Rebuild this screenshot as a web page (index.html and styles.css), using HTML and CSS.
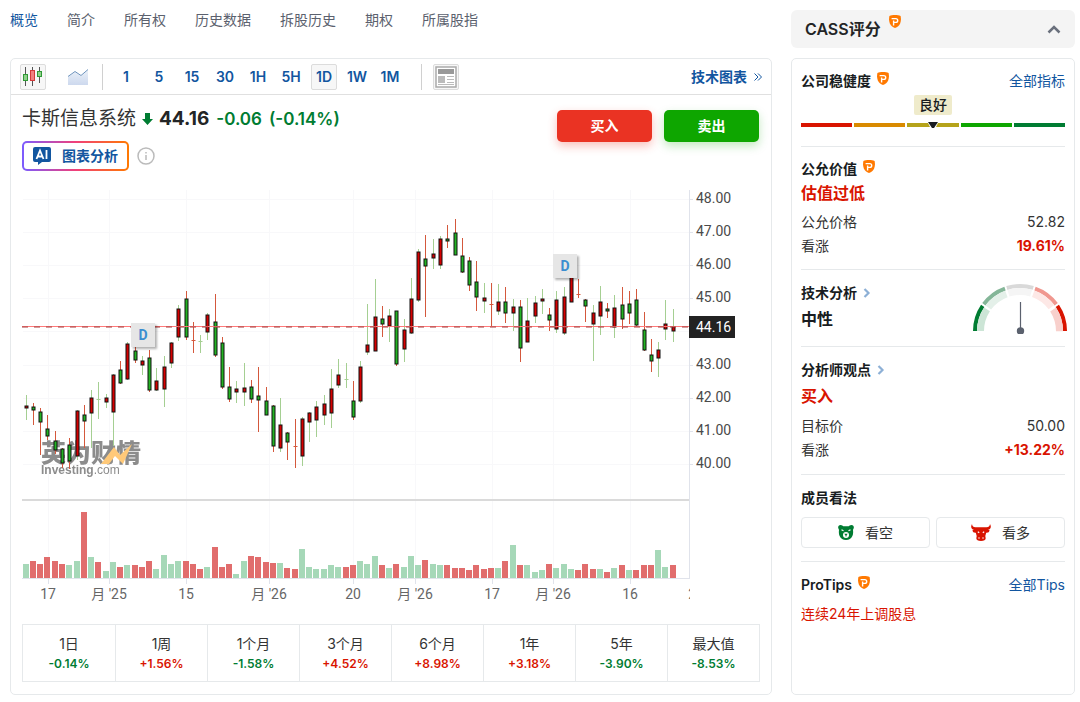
FILE: index.html
```html
<!DOCTYPE html>
<html lang="zh-CN">
<head>
    <meta charset="UTF-8">
    <meta name="viewport" content="width=device-width, initial-scale=1.0">
    <title>卡斯信息系统 - 概览</title>
    <link rel="stylesheet" href="styles.css">
</head>
<body>
<svg width="0" height="0" class="sprite" aria-hidden="true">
    <symbol id="pro" viewBox="0 0 12 13">
        <path fill="#ff7901" d="M6 0c2.200 0 4.200.4 5.600 1 .5 2.600.5 5-.4 7.200-1 2.400-2.800 4-5.200 4.800C3.600 12.200 1.800 10.600.8 8.200-.1 6-.1 3.600.4 1 1.800.4 3.800 0 6 0z"/>
        <path fill="none" stroke="#fff" stroke-width="1.400" d="M2.600 3.600h4.200a1.900 1.900 0 0 1 0 3.800H4.600M4.600 5.500v5"/>
    </symbol>
    <symbol id="next" viewBox="0 0 8 10">
        <path fill="none" stroke="#8db0d6" stroke-width="2.200" d="M1.500 1l4 4-4 4"/>
    </symbol>
</svg>

<div class="page">
    <main>
        <nav class="tabs">
            <a class="active" href="#">概览</a>
            <a href="#">简介</a>
            <a href="#">所有权</a>
            <a href="#">历史数据</a>
            <a href="#">拆股历史</a>
            <a href="#">期权</a>
            <a href="#">所属股指</a>
        </nav>

        <section class="card chart-card">
            <div class="toolbar">
                <button class="tool selected" type="button" aria-label="K线图">
                    <svg width="20" height="20" viewBox="0 0 20 20">
                        <path stroke="#555" d="M2.500 0v19M9.500 0v19M16.500 0v16"/>
                        <rect x=".5" y="7.500" width="4" height="6" fill="#8fd08a" stroke="#2f9a35"/>
                        <rect x="7.500" y="3.500" width="4" height="10" fill="#f08080" stroke="#d23a3a"/>
                        <rect x="14.500" y="4.500" width="4" height="5" fill="#8fd08a" stroke="#2f9a35"/>
                    </svg>
                </button>
                <button class="tool area" type="button" aria-label="面积图">
                    <svg width="20" height="16" viewBox="0 0 20 16">
                        <linearGradient id="fill" x2="0" y2="1"><stop stop-color="#eaf0f8"/><stop offset="1" stop-color="#cdd9ee"/></linearGradient>
                        <path fill="url(#fill)" d="M0 8l7-5 6 4 7-6v15H0z"/>
                        <path fill="none" stroke="#6d93bd" d="M0 7.500l7-5 6 4 7-6"/>
                    </svg>
                </button>
                <span class="divider"></span>
                <div class="intervals">
                    <button class="tool" type="button">1</button>
                    <button class="tool" type="button">5</button>
                    <button class="tool" type="button">15</button>
                    <button class="tool" type="button">30</button>
                    <button class="tool" type="button">1H</button>
                    <button class="tool" type="button">5H</button>
                    <button class="tool selected" type="button">1D</button>
                    <button class="tool" type="button">1W</button>
                    <button class="tool" type="button">1M</button>
                </div>
                <span class="divider last"></span>
                <button class="tool selected" type="button" aria-label="新闻">
                    <svg width="22" height="22" viewBox="0 0 22 22">
                        <rect x="1" y="1" width="20" height="20" fill="#fff" stroke="#aaa" stroke-width="1.500"/>
                        <path fill="#999" d="M3 3h16v5H3z"/>
                        <path fill="#bbb" d="M3 10h7v7H3z"/>
                        <path stroke="#bbb" d="M12 10.500h7M12 13.500h7M12 16.500h7M3 18.500h16"/>
                    </svg>
                </button>
                <a class="tech-link" href="#">技术图表 <svg width="8" height="8" viewBox="0 0 8 8"><path fill="none" stroke="#1256a0" d="M.5.5L4 4 .5 7.500M4 .5L7.500 4 4 7.500"/></svg></a>
            </div>

            <div class="chart-body">
                <div class="quote">
                    <div>
                        <div class="price-line">
                            <h1>卡斯信息系统</h1>
                            <svg width="11" height="12" viewBox="0 0 11 12"><path fill="#007c32" d="M3 0h5v6h3l-5.500 6L0 6h3z"/></svg>
                            <strong>44.16</strong>
                            <span class="change">-0.06</span>
                            <span class="change">(-0.14%)</span>
                        </div>
                        <div class="ai-line">
                            <button class="ai" type="button">
                                <svg width="18" height="18" viewBox="0 0 18 18">
                                    <path fill="#1256a0" d="M2 0h14a2 2 0 0 1 2 2v11a2 2 0 0 1-2 2H9l-4 3v-3H2a2 2 0 0 1-2-2V2a2 2 0 0 1 2-2z"/>
                                    <path fill="none" stroke="#fff" stroke-width="1.800" d="M3.500 12L7 3.500l3.500 8.500M4.800 9.500h4.500M13.500 3v9"/>
                                </svg>
                                图表分析
                            </button>
                            <svg width="18" height="18" viewBox="0 0 18 18" fill="none" stroke="#bbb" stroke-width="1.500">
                                <circle cx="9" cy="9" r="8"/>
                                <path d="M9 8v5M9 5v1.500"/>
                            </svg>
                        </div>
                    </div>
                    <div class="trade">
                        <button class="buy" type="button">买入</button>
                        <button class="sell" type="button">卖出</button>
                    </div>
                </div>

                <svg id="chart" class="chart" viewBox="0 0 738 430"></svg>

                <ul class="periods">
                    <li>1日<b class="green">-0.14%</b></li>
                    <li>1周<b class="red">+1.56%</b></li>
                    <li>1个月<b class="green">-1.58%</b></li>
                    <li>3个月<b class="red">+4.52%</b></li>
                    <li>6个月<b class="red">+8.98%</b></li>
                    <li>1年<b class="red">+3.18%</b></li>
                    <li>5年<b class="green">-3.90%</b></li>
                    <li>最大值<b class="green">-8.53%</b></li>
                </ul>
            </div>
        </section>
    </main>

    <aside>
        <button class="score-head" type="button">
            <span>CASS评分</span>
            <svg class="pro" width="12" height="13"><use href="#pro"/></svg>
            <svg class="chevron" width="14" height="9" viewBox="0 0 14 9"><path fill="none" stroke="#6a707c" stroke-width="2.500" d="M1.500 7.500L7 2l5.500 5.500"/></svg>
        </button>

        <div class="card score">
            <section class="health">
                <div class="row">
                    <h2>公司稳健度 <svg class="pro" width="12" height="13"><use href="#pro"/></svg></h2>
                    <a href="#">全部指标</a>
                </div>
                <span class="grade">良好</span>
                <div class="scale">
                    <i class="s1"></i><i class="s2"></i><i class="s3"></i><i class="s4"></i><i class="s5"></i>
                    <svg class="pointer" width="12" height="8" viewBox="0 0 12 8"><path fill="#fff" d="M0 0h12L8 8H4z"/><path fill="#181c21" d="M1 1h10L7 7H5z"/></svg>
                </div>
            </section>

            <section class="fair">
                <h2>公允价值 <svg class="pro" width="12" height="13"><use href="#pro"/></svg></h2>
                <p class="value red">估值过低</p>
                <div class="rows">
                    <div class="row"><span>公允价格</span><span>52.82</span></div>
                    <div class="row"><span>看涨</span><b class="red">19.61%</b></div>
                </div>
            </section>

            <section class="tech">
                <div>
                    <h2>技术分析 <svg width="8" height="10"><use href="#next"/></svg></h2>
                    <p class="value">中性</p>
                </div>
                <svg class="gauge" width="96" height="53" viewBox="-48 -50 96 53" fill="none">
                    <g stroke-width="4">
                        <path stroke="#007c32" d="M-45 0A45 45 0 0 1-37.300-25.200"/>
                        <path stroke="#84b698" d="M-45 0A45 45 0 0 1-37.300-25.200" transform="rotate(36.500)"/>
                        <path stroke="#d9d9d9" d="M-45 0A45 45 0 0 1-37.300-25.200" transform="rotate(73)"/>
                        <path stroke="#f0978f" d="M-45 0A45 45 0 0 1-37.300-25.200" transform="rotate(109.500)"/>
                        <path stroke="#d91400" d="M-45 0A45 45 0 0 1-37.300-25.200" transform="rotate(146)"/>
                    </g>
                    <g stroke-width="7">
                        <path stroke="#cce5d6" d="M-39.500 0A39.500 39.500 0 0 1-33-21.700"/>
                        <path stroke="#e4f0e9" d="M-39.500 0A39.500 39.500 0 0 1-33-21.700" transform="rotate(36.500)"/>
                        <path stroke="#f5f5f5" d="M-39.500 0A39.500 39.500 0 0 1-33-21.700" transform="rotate(73)"/>
                        <path stroke="#fde8e6" d="M-39.500 0A39.500 39.500 0 0 1-33-21.700" transform="rotate(109.500)"/>
                        <path stroke="#f8d0cc" d="M-39.500 0A39.500 39.500 0 0 1-33-21.700" transform="rotate(147)"/>
                    </g>
                    <path stroke="#5b616e" stroke-width="1.200" d="M.5 0v-29"/>
                    <circle cx=".5" r="3.700" fill="#5b616e"/>
                </svg>
            </section>

            <section>
                <h2>分析师观点 <svg width="8" height="10"><use href="#next"/></svg></h2>
                <p class="value red">买入</p>
                <div class="rows">
                    <div class="row"><span>目标价</span><span>50.00</span></div>
                    <div class="row"><span>看涨</span><b class="red">+13.22%</b></div>
                </div>
            </section>

            <section>
                <h2>成员看法</h2>
                <div class="votes">
                    <button type="button">
                        <svg width="16" height="15" viewBox="0 0 16 15">
                            <path fill="#007c32" d="M2.500 0C4 0 5 .8 5.300 1.300h5.400C11 .8 12 0 13.500 0 15.500 0 16.300 2 15.600 3.400c-.4.900-.6 1-.6 1.600.3 2.500.2 4.500-.6 6-1.200 2.500-3.400 4-6.400 4s-5.200-1.500-6.400-4C.8 9.500.7 7.500 1 5c0-.6-.2-.7-.6-1.600C-.3 2 .5 0 2.500 0z"/>
                            <circle cx="8" cy="10" r="3" fill="#fff"/>
                            <path fill="#007c32" d="M6.300 8.800h3.400L8.500 10.600v1h-1v-1z"/>
                            <path stroke="#fff" stroke-width="1.200" d="M3.500 4.800l2 1M12.500 4.800l-2 1"/>
                        </svg>
                        看空
                    </button>
                    <button type="button">
                        <svg width="20" height="17" viewBox="0 0 20 17">
                            <path fill="#d91400" d="M1 0c.1 2 1 3.200 3.500 3.200h11C18 3.200 18.900 2 19 0c1.700 3 .7 5.200-2 5.800l1.600.5c-.3 1.800-1.500 2.700-3.400 2.500L14.300 12l.4 2.200c-.1 1.800-1.700 2.800-4.700 2.800s-4.600-1-4.700-2.800l.4-2.200-.9-3.200c-1.900.2-3.100-.7-3.400-2.500L3 5.800C.3 5.200-.7 3 1 0z"/>
                            <path stroke="#fff" stroke-width="1.200" d="M6.800 7.800l1.400 1M13.200 7.800l-1.400 1M7.200 14h1.600M11.200 14h1.600"/>
                        </svg>
                        看多
                    </button>
                </div>
            </section>

            <section>
                <div class="row">
                    <h2>ProTips <svg class="pro" width="12" height="13"><use href="#pro"/></svg></h2>
                    <a href="#">全部Tips</a>
                </div>
                <p class="tip red">连续24年上调股息</p>
            </section>
        </div>
    </aside>
</div>

<script src="chart.js"></script>
</body>
</html>
```

FILE: styles.css
```css
* {
    box-sizing: border-box;
}
body {
    margin: 0;
    font-family: Inter, "Noto Sans CJK SC", sans-serif;
    font-size: 14px;
    line-height: 24px;
    color: #333;
    background: #fff;
}
h1, h2, p, ul {
    margin: 0;
    padding: 0;
    font-weight: normal;
}
a {
    color: #1256a0;
    text-decoration: none;
}
button {
    padding: 0;
    border: 0;
    background: none;
    font: inherit;
    color: inherit;
    cursor: pointer;
}
.sprite {
    position: absolute;
}
.page {
    display: grid;
    grid-template-columns: minmax(0, 1fr) 284px;
    gap: 19px;
    padding: 0 5px 7px 10px;
}
main, aside {
    display: flex;
    flex-direction: column;
}
.card {
    border: 1px solid #e6e9eb;
    border-radius: 5px;
}
.red {
    color: #d91400;
}
.green {
    color: #007c32;
}

/* tabs */
.tabs {
    display: flex;
    gap: 29px;
    padding: 8px 0 26px;
}
.tabs a {
    color: #5b616e;
}
.tabs .active {
    color: #1256a0;
}

/* toolbar */
.toolbar {
    display: flex;
    align-items: center;
    height: 36px;
    padding: 0 9px;
    border-bottom: 1px solid #e0e0e0;
}
.tool {
    display: flex;
    align-items: center;
    justify-content: center;
    width: 26px;
    height: 26px;
    border: 1px solid transparent;
    border-radius: 2px;
    font-weight: 600;
    color: #1256a0;
}
.tool.selected {
    border-color: #dcdcdc;
    background: #f7f7f7;
}
.area {
    margin-left: 19px;
}
.divider {
    width: 1px;
    height: 26px;
    margin: 0 10px 0 11px;
    background: #d0d0d0;
}
.divider.last {
    margin: 0 11px 0 18px;
}
.intervals {
    display: flex;
    gap: 7px;
}
.tech-link {
    display: flex;
    align-items: center;
    gap: 7px;
    margin-left: auto;
    font-weight: 600;
}

/* quote */
.chart-body {
    padding: 12px 11px;
}
.quote {
    display: flex;
    justify-content: space-between;
}
.price-line {
    display: flex;
    align-items: center;
    font-size: 17px;
}
.price-line h1 {
    margin-right: 6px;
    font-size: 19px;
}
.price-line strong {
    margin: 0 7px 0 6px;
    font-size: 19px;
    font-weight: 700;
    color: #232526;
}
.change {
    margin-right: 7px;
    font-weight: 600;
    color: #007c32;
}
.ai-line {
    display: flex;
    align-items: center;
    gap: 8px;
    margin: 10px 0 9px;
}
.ai {
    display: flex;
    align-items: center;
    gap: 11px;
    height: 30px;
    padding: 0 9px;
    border: 2px solid transparent;
    border-radius: 5px;
    background: linear-gradient(#fff, #fff) padding-box, linear-gradient(90deg, #7b5cff, #f0407a 50%, #ff7901) border-box;
    font-weight: 600;
    color: #1256a0;
}
.trade {
    display: flex;
    gap: 12px;
    margin: 3px 1px 0 0;
}
.trade button {
    width: 95px;
    height: 32px;
    border-radius: 5px;
    font-weight: 700;
    color: #fff;
}
.buy {
    background: #ea3323;
    box-shadow: 0 4px 10px rgba(234, 51, 35, 0.3);
}
.sell {
    background: #0ea600;
    box-shadow: 0 4px 10px rgba(14, 166, 0, 0.25);
}

/* chart */
.chart {
    display: block;
    width: 100%;
    font-family: Roboto, "Noto Sans CJK SC", sans-serif;
    font-size: 14px;
}
.grid {
    stroke: #f8f8fa;
}
.axis {
    stroke: #e0e3eb;
}
.split {
    stroke: #dadada;
    stroke-width: 2;
}
.label {
    fill: #4a4a4a;
}
.date {
    fill: #666;
    text-anchor: middle;
}
.up-wick {
    stroke: #a5cf92;
}
.down-wick {
    stroke: #d4583c;
}
.up-body, .down-body {
    stroke: #111;
}
.up-body {
    fill: #d60000;
}
.down-body {
    fill: #23b323;
}
.vol-up {
    fill: #a6d8b8;
}
.vol-down {
    fill: #e16d6d;
}
.last-line {
    stroke: #ff7a7a;
}
.last-dash {
    stroke: #a33c3c;
    stroke-dasharray: 6 6;
}
.tag {
    fill: #222;
}
.tag-text {
    fill: #fff;
}
.flag {
    fill: #e6e6e6;
    filter: drop-shadow(2px 2px 1px rgba(0, 0, 0, 0.3));
}
.flag-text {
    fill: #3b8ed0;
    font-weight: 700;
    text-anchor: middle;
}
.mark {
    fill: #666;
    opacity: 0.75;
}
.mark-cn {
    font-family: "Noto Sans CJK SC", sans-serif;
    font-size: 25px;
    font-weight: 900;
}
.mark-en {
    font-family: "Liberation Sans", sans-serif;
    font-size: 12px;
    font-weight: 700;
}
.mark-com {
    font-weight: 400;
}

/* periods */
.periods {
    display: grid;
    grid-template-columns: repeat(8, 1fr);
    margin-top: 14px;
    border: 1px solid #e6e9eb;
    list-style: none;
}
.periods li {
    padding: 8px 0 7px;
    text-align: center;
    line-height: 21px;
}
.periods li + li {
    border-left: 1px solid #e6e9eb;
}
.periods b {
    display: block;
    font-size: 12px;
    font-weight: 600;
    line-height: 20px;
}

/* score */
.score-head {
    display: flex;
    align-items: center;
    height: 38px;
    margin: 10px 0;
    padding: 0 14px;
    border-radius: 6px;
    background: #f4f4f4;
    font-size: 16px;
    font-weight: 600;
    color: #232526;
}
.score-head .pro {
    margin: 0 0 16px 8px;
}
.chevron {
    margin-left: auto;
}
.score {
    flex: 1;
    padding: 0 9px;
}
.score section {
    padding: 11px 0 12px;
    border-bottom: 1px solid #e6e9eb;
}
.score section:last-child {
    border-bottom: 0;
}
.score h2 {
    display: flex;
    align-items: center;
    gap: 6px;
    font-size: 14px;
    font-weight: 600;
    color: #181c21;
}
.score h2 .pro {
    margin-bottom: 6px;
}
.row {
    display: flex;
    justify-content: space-between;
}
.row b {
    font-weight: 700;
}
.value {
    font-size: 16px;
    font-weight: 600;
    line-height: 28px;
}
.value:not(.red) {
    color: #181c21;
}
.rows {
    margin-top: 4px;
}
.score .health {
    padding: 10px 0 12px;
}
.grade {
    display: block;
    width: 38px;
    margin: 2px auto 8px;
    border-radius: 2px;
    background: #efebcb;
    font-weight: 500;
    line-height: 20px;
    text-align: center;
    color: #181c21;
}
.scale {
    position: relative;
    display: grid;
    grid-template-columns: repeat(5, 1fr);
    gap: 2px;
    margin-bottom: 7px;
}
.scale i {
    height: 4px;
}
.s1 { background: #d91400; }
.s2 { background: #d98a00; }
.s3 { background: #b5a31a; }
.s4 { background: #0ea600; }
.s5 { background: #007c32; }
.pointer {
    position: absolute;
    top: -2px;
    left: calc(50% - 6px);
}
.score .fair {
    padding: 10px 0 11px;
}
.fair .value {
    line-height: 24px;
}
.fair .rows {
    margin-top: 5px;
}
.tech {
    display: flex;
    justify-content: space-between;
}
.gauge {
    margin-right: -3px;
}
.votes {
    display: grid;
    grid-template-columns: 1fr 1fr;
    gap: 6px;
    margin: 7px 0 1px;
}
.votes button {
    display: flex;
    align-items: center;
    justify-content: center;
    gap: 11px;
    height: 31px;
    border: 1px solid #e6e9eb;
    border-radius: 4px;
}
.tip {
    margin-top: 5px;
}
```

FILE: chart.js
```js
// high, body top, body bottom, low, direction, volume
const candles = [
    [215, 226, 228, 240, 'u', -14], [223, 227, 230, 245, 'd', 17], [228, 232, 242, 275, 'd', 14],
    [235, 249, 256, 260, 'd', 21], [251, 261, 270, 274, 'd', 17], [268, 269, 283, 288, 'd', 14],
    [258, 265, 281, 289, 'd', -13], [230, 231, 276, 280, 'u', -17], [225, 235, 241, 268, 'd', 66],
    [210, 218, 233, 268, 'u', -21], [202, 219, 219, 239, 'u', 16], [214, 218, 222, 228, 'u', -7],
    [194, 195, 232, 266, 'u', -16], [181, 190, 203, 204, 'd', 11], [162, 164, 199, 200, 'u', -13],
    [165, 171, 180, 183, 'd', 13], [176, 181, 185, 195, 'u', 11], [170, 178, 210, 212, 'd', 17],
    [188, 201, 210, 211, 'u', -9], [176, 187, 209, 227, 'u', -23], [162, 163, 183, 188, 'u', -14],
    [125, 129, 157, 161, 'u', -17], [111, 119, 157, 160, 'd', 17], [142, 160, 160, 173, 'd', 14],
    [155, 161, 161, 173, 'u', 9], [133, 135, 152, 160, 'u', -11], [114, 142, 175, 177, 'd', 31],
    [157, 163, 207, 209, 'd', 11], [187, 207, 219, 222, 'd', 14], [201, 209, 212, 223, 'u', -4],
    [183, 208, 212, 226, 'u', -17], [200, 207, 219, 223, 'd', 22], [187, 216, 220, 252, 'd', 21],
    [207, 221, 235, 235, 'd', 16], [225, 226, 266, 272, 'd', 15], [218, 245, 268, 272, 'u', -15],
    [252, 253, 262, 280, 'd', 10], [239, 266, 266, 288, 'd', 9], [237, 239, 276, 286, 'u', -29],
    [232, 233, 242, 262, 'u', -11], [221, 227, 240, 257, 'u', -9], [215, 224, 235, 245, 'u', -9],
    [189, 209, 233, 248, 'u', -13], [179, 195, 205, 208, 'u', -11], [183, 199, 199, 208, 'u', 11],
    [201, 221, 237, 240, 'd', 13], [181, 187, 221, 223, 'u', -17], [124, 165, 172, 175, 'u', -14],
    [99, 137, 171, 171, 'u', -22], [126, 139, 144, 157, 'd', 13], [129, 136, 146, 162, 'u', -10],
    [131, 131, 184, 186, 'd', 14], [139, 150, 169, 182, 'u', -11], [98, 119, 153, 154, 'u', -22],
    [69, 72, 120, 122, 'u', -13], [55, 79, 86, 137, 'd', 18], [59, 74, 78, 89, 'u', -14],
    [56, 59, 85, 89, 'u', -13], [45, 59, 61, 68, 'd', 13], [39, 53, 75, 75, 'd', 10],
    [58, 76, 92, 93, 'd', 10], [77, 81, 105, 111, 'd', 8], [81, 102, 117, 131, 'd', 13],
    [103, 118, 121, 133, 'u', 9], [103, 124, 124, 147, 'd', 10], [104, 122, 131, 135, 'u', -10],
    [107, 122, 133, 143, 'd', 17], [119, 127, 133, 151, 'u', -33], [120, 127, 168, 182, 'd', 13],
    [118, 141, 162, 162, 'u', -13], [116, 123, 136, 143, 'u', -6], [109, 119, 121, 134, 'u', -8],
    [128, 135, 140, 151, 'd', 14], [111, 120, 149, 153, 'u', -10], [107, 117, 153, 155, 'u', -14],
    [95, 97, 122, 122, 'u', -9], [99, 114, 114, 118, 'd', 8], [119, 120, 126, 142, 'd', 14],
    [125, 133, 144, 181, 'u', 9], [106, 122, 136, 155, 'u', -9], [123, 129, 131, 138, 'd', 6],
    [115, 128, 147, 158, 'u', -10], [107, 125, 139, 149, 'd', 13], [111, 124, 133, 144, 'd', -8],
    [109, 120, 145, 146, 'd', 8], [132, 150, 170, 171, 'd', 13], [159, 175, 181, 192, 'd', 13],
    [162, 170, 178, 197, 'u', -28], [120, 144, 149, 160, 'u', -11], [129, 147, 151, 162, 'u', 13]
];
const dates = [
    [26, '17'], [87, "月 '25"], [164, '15'], [247, "月 '26"], [331, '20'],
    [393, "月 '26"], [470, '17'], [531, "月 '26"], [608, '16']
];

const chart = document.getElementById('chart');
let out = '';

function line(cls, x1, y1, x2, y2) {
    out += `<line class="${cls}" x1="${x1}" y1="${y1}" x2="${x2}" y2="${y2}"/>`;
}
function rect(cls, x, y, w, h) {
    out += `<rect class="${cls}" x="${x}" y="${y}" width="${w}" height="${h}"/>`;
}
function text(cls, x, y, value) {
    out += `<text class="${cls}" x="${x}" y="${y}">${value}</text>`;
}

// grid and axes
dates.forEach(([x, name]) => {
    line('grid', x + 0.5, 10, x + 0.5, 398);
    line('axis', x + 0.5, 398, x + 0.5, 404);
    text('date', x, 419, name);
});
for (let price = 48; price >= 40; price--) {
    const y = 19.5 + Math.round((48 - price) * 33.1);
    line('grid', 1, y, 667, y);
    line('axis', 667, y, 671, y);
    if (price !== 44) {
        text('label', 674, y + 3.5, price.toFixed(2));
    }
}
line('split', 0, 320, 667, 320);
line('axis', 0, 398.5, 668, 398.5);
line('axis', 667.5, 10, 667.5, 398);
out += '<clipPath id="edge"><rect x="0" y="400" width="668" height="30"/></clipPath>';
out += '<g clip-path="url(#edge)"><text class="date" x="674" y="419">23</text></g>';

// watermark
out += '<g class="mark"><text class="mark-cn" x="19" y="282">英为财情</text>' +
    '<path fill="#ffb84d" d="M79 284l13-17 6 8 12-11-9 20-8-8-6 8z"/>' +
    '<text class="mark-en" x="19" y="294">Investing<tspan class="mark-com">.com</tspan></text></g>';

candles.forEach(([high, top, bottom, low, dir, volume], i) => {
    const x = 4.5 + Math.floor(i * 7.27 + 0.12);
    const kind = dir === 'u' ? 'up' : 'down';
    line(kind + '-wick', x, high, x, low);
    if (top === bottom) {
        line(kind + '-wick', x - 2, top + 0.5, x + 2, top + 0.5);
    } else {
        rect(kind + '-body', x - 1.5, top, 3, bottom - top);
    }
    // negative volume is painted green
    const size = Math.abs(volume);
    rect(volume < 0 ? 'vol-up' : 'vol-down', x - 3.5, 398 - size, 6, size);
});

// last price
line('last-line', 0, 146.5, 667, 146.5);
line('last-dash', 0, 147, 667, 147);
rect('tag', 667, 136, 46, 22);
text('tag-text', 674, 152, '44.16');

// dividends
[[109, 143], [531, 74]].forEach(([x, y]) => {
    rect('flag', x, y, 24, 24);
    text('flag-text', x + 12, y + 17, 'D');
});

chart.innerHTML = out;
```
